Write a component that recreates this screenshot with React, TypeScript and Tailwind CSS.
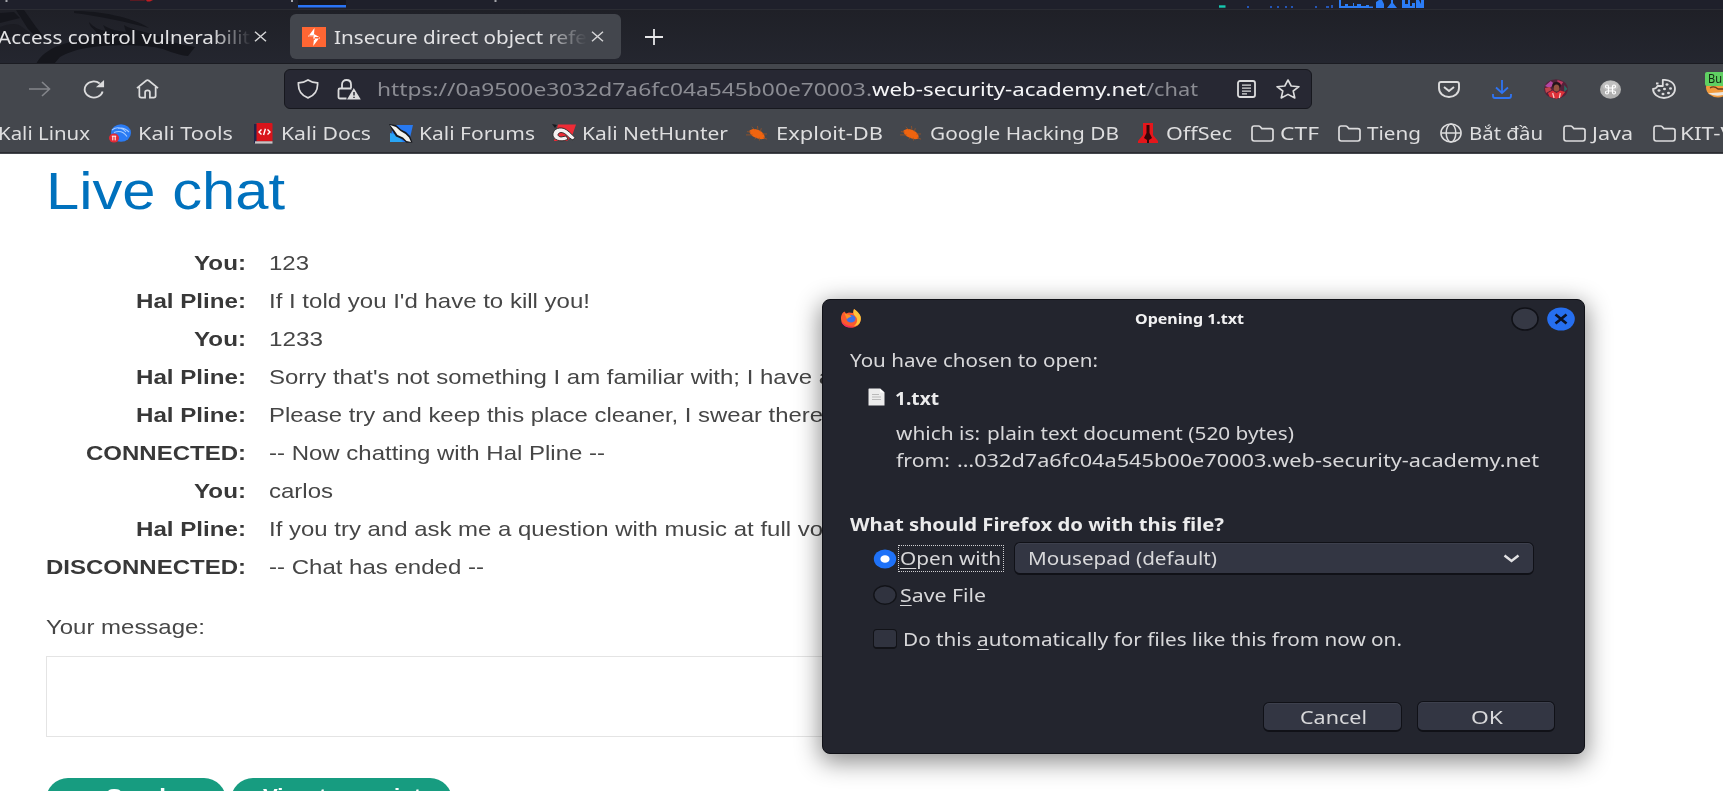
import { useLayoutEffect, useRef, type ReactNode } from "react";

/** Single line of text stretched horizontally to fill a given width. */
function Fit({ w, className = "", children }: { w: number; className?: string; children: ReactNode }) {
  const inner = useRef<HTMLSpanElement>(null);
  useLayoutEffect(() => {
    const el = inner.current;
    if (!el) return;
    el.style.transform = "none";
    const natural = el.getBoundingClientRect().width;
    el.style.transform = `scaleX(${w / natural})`;
  }, [w]);
  return (
    <span className={`block shrink-0 text-left ${className}`} style={{ width: w }}>
      <span ref={inner} className="inline-block origin-left whitespace-pre">
        {children}
      </span>
    </span>
  );
}

function Icon({
  w,
  h,
  box = "0 0 24 24",
  className = "",
  children,
}: {
  w: number;
  h: number;
  box?: string;
  className?: string;
  children: ReactNode;
}) {
  return (
    <svg width={w} height={h} viewBox={box} preserveAspectRatio="none" fill="none" className={`block shrink-0 ${className}`}>
      {children}
    </svg>
  );
}

function Folder() {
  return (
    <Icon w={23} h={17} box="0 0 23 17">
      <path d="M1 3.2Q1 1 3.2 1H7.6Q8.6 1 9.3 1.8L10.8 3.6H19.8Q22 3.6 22 5.6V13.8Q22 16 19.8 16H3.2Q1 16 1 13.8Z" stroke="#dcdcdd" strokeWidth="1.7" />
    </Icon>
  );
}

function Bug() {
  return (
    <Icon w={22} h={17} box="0 0 23 18">
      <path d="M3.500 6C7 3 12 4 16 7C18.500 9 20.500 12 19 14.500C16 15.500 12 14.800 9 13C6 11.500 3.500 9 3.500 6Z" fill="#f0640f" />
      <path d="M1 7L5 7.5M0 10.500L7 10.500M6 2L9 5M12 1L12.500 5M16 3.5L15 7M9 15L11 13M14 16.500L14 13.500M22 9.500L17 9.500M22 15L18 13.5" stroke="#a35422" strokeWidth=".8" />
    </Icon>
  );
}

function KaliTools() {
  return (
    <Icon w={22} h={19} box="0 0 22 19">
      <ellipse cx="12" cy="9" rx="10" ry="8.700" fill="#2a7bf4" />
      <path d="M3 6C8 2 14 4 17 8M5 8.5C10 6.5 15 8 18 12.5M9 4.5C13 3 17 5 20 8" stroke="#a5cbff" strokeWidth="1.1" />
      <ellipse cx="5" cy="14" rx="5" ry="4.6" fill="#e32a36" />
      <path d="M2.8 12.2H7.2M3.8 12.2V16.4M6.2 12.2V16.4" stroke="#fff" strokeWidth="1" />
    </Icon>
  );
}

function KaliDocs() {
  return (
    <Icon w={19} h={21} box="0 0 19 21">
      <path d="M0 1H4V20H0Z" fill="#20244a" />
      <path d="M2.5 0H17.5Q18.5 0 18.5 1V18.5H2.5Z" fill="#d9141b" />
      <path d="M1 18.3H18.5V20.6H1Z" fill="#c9c3c5" />
      <path d="M7.5 6.5L5 9L7.5 11.5M13.5 6.5L16 9L13.5 11.5M11.4 5.8L9.6 12" stroke="#fff" strokeWidth="1.4" />
    </Icon>
  );
}

function KaliForums() {
  return (
    <Icon w={24} h={19} box="0 0 24 19">
      <path d="M4 1H24L20 18H1Z" fill="#2879f0" />
      <path d="M1 9L8 11L14 18H1Z" fill="#29a5f5" />
      <path d="M0 0L7 1L12 5.500L17 8L21 12L23.500 18.500L17.500 18.800L13 15L7 12.500L3.500 7Z" fill="#17181d" />
      <path d="M1 1L7 3L11.500 7L16.500 10L20 13.500L22 18L17.5 17L14 13.5L8.5 11L5 6Z" fill="#f2f2ee" />
    </Icon>
  );
}

function NetHunter() {
  return (
    <Icon w={24} h={18} box="0 0 24 18">
      <path d="M6 .5H24L20 12L15 17H2Z" fill="#ee2b36" />
      <path d="M0 0L5 1L3 4Z" fill="#17181d" />
      <path d="M1 12C0 6 6 2.5 12 4.5C16 6 19 10 23 13.5L21 16C16 14 14 8.5 9 8.5C5 9 5 12.5 9 13L14 12L16 15C12 18 3 17.5 1 12Z" fill="#f4f1f1" stroke="#222" strokeWidth=".9" />
    </Icon>
  );
}

function OffSec() {
  return (
    <Icon w={20} h={20} box="0 0 20 20">
      <path d="M5 0H15V12L20 18V20H0V18L5 12Z" fill="#e5161b" />
      <path d="M8.5 2H11.5V10L14 15L11 17V20H9V17L6 15L8.5 10Z" fill="#350608" />
    </Icon>
  );
}

function Globe() {
  return (
    <Icon w={22} h={20} box="0 0 22 20">
      <g stroke="#dcdcdd" strokeWidth="1.5">
        <ellipse cx="11" cy="10" rx="10.1" ry="9" />
        <ellipse cx="11" cy="10" rx="4.8" ry="9" />
        <path d="M1 10H21" />
      </g>
    </Icon>
  );
}

const bookmarks: { icon?: ReactNode; label: string; gap: number; pad: number; w: number }[] = [
  { label: "Kali Linux", gap: 0, pad: -2, w: 92 },
  { icon: <KaliTools />, label: "Kali Tools", gap: 19, pad: 7, w: 95 },
  { icon: <KaliDocs />, label: "Kali Docs", gap: 21, pad: 8, w: 90 },
  { icon: <KaliForums />, label: "Kali Forums", gap: 18, pad: 6, w: 116 },
  { icon: <NetHunter />, label: "Kali NetHunter", gap: 17, pad: 6, w: 146 },
  { icon: <Bug />, label: "Exploit-DB", gap: 18, pad: 8, w: 107 },
  { icon: <Bug />, label: "Google Hacking DB", gap: 17, pad: 8, w: 189 },
  { icon: <OffSec />, label: "OffSec", gap: 19, pad: 8, w: 66 },
  { icon: <Folder />, label: "CTF", gap: 19, pad: 6, w: 39 },
  { icon: <Folder />, label: "Tieng", gap: 19, pad: 6, w: 54 },
  { icon: <Globe />, label: "Bắt đầu", gap: 19, pad: 7, w: 74 },
  { icon: <Folder />, label: "Java", gap: 20, pad: 6, w: 41 },
  { icon: <Folder />, label: "KIT-V", gap: 20, pad: 4, w: 54 },
];

const messages: { who: string; lw: number; text: string; w: number }[] = [
  { who: "You:", lw: 52, text: "123", w: 40 },
  { who: "Hal Pline:", lw: 110, text: "If I told you I'd have to kill you!", w: 321 },
  { who: "You:", lw: 52, text: "1233", w: 54 },
  { who: "Hal Pline:", lw: 110, text: "Sorry that's not something I am familiar with; I have a", w: 563 },
  { who: "Hal Pline:", lw: 110, text: "Please try and keep this place cleaner, I swear there", w: 554 },
  { who: "CONNECTED:", lw: 160, text: "-- Now chatting with Hal Pline --", w: 336 },
  { who: "You:", lw: 52, text: "carlos", w: 64 },
  { who: "Hal Pline:", lw: 110, text: "If you try and ask me a question with music at full vo", w: 554 },
  { who: "DISCONNECTED:", lw: 200, text: "-- Chat has ended --", w: 215 },
];

function Dragon() {
  return (
    <svg className="absolute left-0 top-0" width="220" height="54" viewBox="0 9 220 54" fill="#15161c">
      <path d="M0 12L14 11L20 17L0 22Z" />
      <path d="M0 26C10 22 18 22 22 26L30 32L0 38Z" opacity=".5" />
      <path d="M16 9H24L36 26L44 36L38 38L28 28Z" />
      <path d="M74 10C100 10 132 16 149 27C130 22 100 15 74 12Z" />
      <path d="M36 63C44 48 62 42 84 38C108 32 90 30 89 21C94 27 100 29 106 30L103 24C111 29 118 30 126 31L124 24C132 30 150 30 164 38C176 43 186 44 195 46L188 55C176 54 166 48 154 46C130 43 82 42 60 56L54 63Z" />
    </svg>
  );
}

function TopStrip() {
  return (
    <div className="h-[9px] shrink-0 overflow-hidden bg-[#1f202b]">
      <svg className="block" width="1723" height="9" viewBox="0 0 1723 9">
        <path d="M5.5 0H7.5V2H5.5ZM291 0H293V2H291ZM494.500 0H496.500V2H494.500Z" fill="#a3a4aa" />
        <path d="M130 0H146L144 1H130Z" fill="#5a1a22" />
        <path d="M146 0H153L150 1.500H147Z" fill="#c21c22" />
        <path d="M298 0H346V5H298Z" fill="#16171f" />
        <path d="M298 5H346V7.400H298Z" fill="#2a74f5" />
        <path d="M1219 5.300H1225.500V7.700H1219Z" fill="#16c9b0" />
        <path d="M1247 6h2v2h-2zM1270 6h2v2h-2zM1277 6h2v2h-2zM1285 6h2v2h-2zM1291 6h2v2h-2zM1315 6h2v2h-2zM1326 6h3v2h-3zM1331 5h2v3h-2z" fill="#2455b5" />
        <path d="M1339 8V0H1341V6H1345V4H1348V6H1353V3H1354V6H1357V4H1361V6H1366V5H1369V6.500H1373V8ZM1376 8V2L1379 0H1382L1384 4V8ZM1387 8L1391 3V0H1393V3L1397 8ZM1402 8V0H1405V4H1408V0H1410V6H1412V3H1415V8ZM1416 8V0H1419L1421 4V0H1424V8Z" fill="#2b7cf6" />
      </svg>
    </div>
  );
}

function Close() {
  return (
    <Icon w={13} h={11} box="0 0 13 11">
      <path d="M1 .8L12 10.200M12 .8L1 10.200" stroke="#d5d5d7" strokeWidth="1.500" />
    </Icon>
  );
}

function Tabs() {
  return (
    <div className="relative flex h-[55px] shrink-0 items-center overflow-hidden border-y border-t-[#2b2c33] border-b-[#1b1c22] bg-linear-to-b from-[#1f2027] to-[#24262f] text-[18px] text-[#e2e2e4]">
      <Dragon />
      <div className="relative w-[252px] overflow-hidden mask-r-from-[84%] mask-r-to-100%">
        <Fit w={252} className="-ml-0.5 h-[53px] leading-[54px]">Access control vulnerabilit</Fit>
      </div>
      <div className="relative ml-0.5">
        <Close />
      </div>
      <div className="ml-[23px] flex h-[45px] w-[331px] items-center rounded-md bg-[#43464d] pl-3">
        <Icon w={24} h={20} box="0 0 24 20">
          <path d="M0 0H24V20H0Z" fill="#ff6633" />
          <path d="M12.500 1L6 9.800H11.800ZM11.200 19L18 10H12.200ZM6 8.500H12.800V13H11.800L12 10H6ZM12 7L18 10.500V11.500H11.200Z" fill="#fff" />
        </Icon>
        <div className="ml-2 w-[253px] overflow-hidden mask-r-from-[82%] mask-r-to-100%">
          <Fit w={253} className="h-[45px] leading-[46px]">Insecure direct object refe</Fit>
        </div>
        <div className="ml-1">
          <Close />
        </div>
      </div>
      <Icon w={18} h={16} box="0 0 18 16" className="ml-6">
        <path d="M9 0V16M0 8H18" stroke="#e6e6e8" strokeWidth="1.800" />
      </Icon>
    </div>
  );
}

function Toolbar() {
  return (
    <div className="flex h-[50px] shrink-0 items-center">
      <Icon w={22} h={16} box="0 0 22 16" className="ml-[29px]">
        <path d="M0 8H20.500M13 1L20.500 8L13 15" stroke="#84868b" strokeWidth="1.600" />
      </Icon>
      <Icon w={22} h={19} box="0 0 23 20" className="ml-8">
        <path d="M17.500 3.600A9.500 8.500 0 1 0 20.500 12" stroke="#dcdcdd" strokeWidth="1.900" />
        <path d="M22 0V7.500H13.500Z" fill="#dcdcdd" />
      </Icon>
      <Icon w={23} h={20} box="0 0 24 21" className="ml-[31px]">
        <path d="M1 9.500L10.800 1.600Q12 .8 13.200 1.600L23 9.500M3.500 8.500V17.500Q3.500 19.500 5.500 19.500H9.500V13.800Q9.500 12 12 12T14.500 13.800V19.500H18.500Q20.500 19.500 20.500 17.500V8.500" stroke="#dcdcdd" strokeWidth="1.800" />
      </Icon>
      <div className="ml-[125px] flex h-10 w-[1028px] items-center rounded-md border-[1.500px] border-[#17181e] bg-[#272833] pl-3 text-[18px]">
        <Icon w={22} h={20} box="0 0 23 21">
          <path d="M11.500 1C14.500 3 18 3.800 21.500 4C22 12 18 17.500 11.500 19.800C5 17.500 1 12 1.500 4C5 3.800 8.500 3 11.500 1Z" stroke="#dcdcdd" strokeWidth="1.800" />
        </Icon>
        <Icon w={24} h={21} box="0 0 24 21" className="ml-[18px]">
          <path d="M5 9V5.500C5 2.500 7 1 9.500 1S14 2.500 14 5.500V9M9.500 19.500H3Q1.500 19.500 1.500 18V11Q1.500 9.500 3 9.500H14.500" stroke="#dcdcdd" strokeWidth="1.800" />
          <path d="M16.800 9L23.800 20.500H10Z" fill="#dcdcdd" />
          <path d="M17 13V16.500M17 17.800V19" stroke="#272833" strokeWidth="1.500" />
        </Icon>
        <Fit w={495} className="ml-4 leading-[37px] text-[#8b8c93]">https://0a9500e3032d7a6fc04a545b00e70003.</Fit>
        <Fit w={274} className="leading-[37px] text-[#f5f5f7]">web-security-academy.net</Fit>
        <Fit w={52} className="leading-[37px] text-[#8b8c93]">/chat</Fit>
        <Icon w={19} h={18} box="0 0 19 18" className="ml-[39px]">
          <rect x="1" y="1" width="17" height="16" rx="2" stroke="#dcdcdd" strokeWidth="1.800" />
          <path d="M5 5.200H14M5 8.200H14M5 11.200H14M5 13.800H10" stroke="#dcdcdd" strokeWidth="1.300" />
        </Icon>
        <Icon w={24} h={20} box="0 0 24 20" className="ml-5">
          <path d="M12 1L15.200 7L23 7.700L17.200 12L18.800 19L12 15.400L5.200 19L6.800 12L1 7.700L8.800 7Z" stroke="#dcdcdd" strokeWidth="1.600" strokeLinejoin="round" />
        </Icon>
      </div>
      <Icon w={22} h={17} box="0 0 22 17" className="ml-[126px]">
        <path d="M3 1H19Q21 1 21 3V7C21 12.500 16.500 16 11 16S1 12.500 1 7V3Q1 1 3 1Z" stroke="#dcdcdd" strokeWidth="1.900" />
        <path d="M6 6L11 10L16 6" stroke="#dcdcdd" strokeWidth="2" />
      </Icon>
      <Icon w={20} h={19} box="0 0 20 19" className="ml-8">
        <path d="M10 0V13M4 7.500L10 13L16 7.500M1 14V16Q1 18 3 18H17Q19 18 19 16V14" stroke="#2f74f3" strokeWidth="1.800" />
      </Icon>
      <Icon w={24} h={20} box="0 0 25 20" className="ml-8">
        <ellipse cx="12.500" cy="10" rx="12.300" ry="9.800" fill="#54223a" />
        <path d="M1 7L7 2L11 5L6 9Z" fill="#b247a4" />
        <path d="M14 1L20 3L18 6L14 4Z" fill="#c23a62" />
        <path d="M1 9L6 8L8 11L2 14Z" fill="#c2434a" />
        <path d="M21 6L24.500 10L21 13Z" fill="#2b6b63" />
        <ellipse cx="13" cy="6.500" rx="4.500" ry="3.500" fill="#231419" />
        <ellipse cx="13" cy="9" rx="3" ry="3.500" fill="#95533f" />
        <path d="M4 14L9 11.500L13 14L17 11.500L22 13L18 18L13 19.800L6 18Z" fill="#dd3038" />
        <path d="M9 14L10.500 19M17 14L16 19" stroke="#f4c9c6" strokeWidth="1.300" />
      </Icon>
      <Icon w={21} h={19} box="0 0 21 19" className="ml-[32px]">
        <ellipse cx="10.500" cy="9.500" rx="10.500" ry="9.300" fill="#b0b0b0" />
        <ellipse cx="10.500" cy="6" rx="8" ry="5" fill="#c0c0c0" />
        <path d="M8.500 8H12.500V11H8.500ZM8.500 8H7Q5.500 8 5.500 6.500T7 5T8.500 6.500ZM12.500 8H14Q15.500 8 15.500 6.500T14 5T12.500 6.500ZM8.500 11H7Q5.500 11 5.500 12.500T7 14T8.500 12.500ZM12.500 11H14Q15.500 11 15.500 12.500T14 14T12.500 12.500Z" stroke="#fff" strokeWidth="1.200" />
      </Icon>
      <Icon w={24} h={20} box="0 0 24 20" className="ml-[31px]">
        <path d="M10.800 1C18 .2 23 4.500 23 10C23 15 18 19 12 19S1 15 1 9.800C3 9.800 4.800 8.800 5.500 7H10.800V1.500Z" stroke="#dcdcdd" strokeWidth="1.800" strokeLinejoin="round" />
        <path d="M4 3.500H6.500V5.500H4Z" fill="#dcdcdd" />
        <g fill="#dcdcdd">
          <ellipse cx="15" cy="5.500" rx="1.500" ry="1.300" />
          <ellipse cx="18.500" cy="9.500" rx="1.500" ry="1.300" />
          <ellipse cx="12.500" cy="10" rx="1.500" ry="1.300" />
          <ellipse cx="7" cy="11.500" rx="1.500" ry="1.300" />
          <ellipse cx="16.500" cy="14" rx="1.500" ry="1.300" />
          <ellipse cx="11" cy="15" rx="1.500" ry="1.300" />
        </g>
      </Icon>
      <div className="relative ml-[29px] h-[50px] w-[18px] shrink-0 overflow-hidden">
        <svg className="absolute left-0 top-[14px]" width="18" height="20" viewBox="0 0 18 20">
          <ellipse cx="13" cy="9.500" rx="12" ry="10" fill="#f29a3c" />
          <path d="M3 15Q9 19 18 17V14Q8 15 3 15Z" fill="#ece5dc" />
          <path d="M5 10Q9 7.500 13 11H18" stroke="#6b3c1c" strokeWidth="1.300" fill="none" />
        </svg>
        <div className="absolute left-0 top-[8px] h-[14px] w-[20px] rounded-xs bg-[#5fd062] pl-[3px] text-[12px] leading-[14px] text-[#10240f]">
          <Fit w={14}>Bu</Fit>
        </div>
      </div>
    </div>
  );
}

function Bookmarks() {
  return (
    <div className="flex h-[39px] shrink-0 items-center overflow-hidden border-b border-[#2b2c31] text-[18px] text-[#dededf]">
      {bookmarks.map((b) => (
        <div key={b.label} className="flex shrink-0 items-center" style={{ marginLeft: b.gap }}>
          {b.icon}
          <div className="shrink-0" style={{ marginLeft: b.pad }}>
            <Fit w={b.w} className="leading-[38px]">{b.label}</Fit>
          </div>
        </div>
      ))}
    </div>
  );
}

function Chat() {
  return (
    <main className="flex h-[637px] shrink-0 flex-col overflow-hidden bg-white pl-[46px] font-['Liberation_Sans',sans-serif] text-[21px] text-[#464646]">
      <h1 className="mt-1.5 text-[51px] leading-[64px] text-[#0071bd]">
        <Fit w={239}>Live chat</Fit>
      </h1>
      <div className="mt-[19.500px]">
        {messages.map((m, i) => (
          <div key={i} className="flex h-[38px] items-center leading-[38px]">
            <div className="flex w-[200px] shrink-0 justify-end font-bold text-[#383838]">
              <Fit w={m.lw}>{m.who}</Fit>
            </div>
            <Fit w={m.w} className="ml-[23px]">{m.text}</Fit>
          </div>
        ))}
      </div>
      <Fit w={159} className="mt-[22px] leading-[38px]">Your message:</Fit>
      <div className="mt-[10px] h-[81px] w-[1400px] shrink-0 border border-[#e4e4e4]" />
      <div className="mt-[41px] flex gap-[5px] text-[21px] font-bold leading-[38px] text-white">
        <div className="flex h-[44px] w-[180px] shrink-0 justify-center rounded-full bg-[#179c80]">
          <Fit w={60} className="-mt-px">Send</Fit>
        </div>
        <div className="flex h-[44px] w-[221px] shrink-0 justify-center rounded-full bg-[#179c80]">
          <Fit w={158} className="-mt-px">View transcript</Fit>
        </div>
      </div>
    </main>
  );
}

function Radio({ on = false }: { on?: boolean }) {
  return on ? (
    <Icon w={24} h={20} box="0 0 24 20">
      <ellipse cx="12" cy="10" rx="11.200" ry="9.400" fill="#1f72f8" />
      <ellipse cx="12" cy="10" rx="4.600" ry="3.800" fill="#fff" />
    </Icon>
  ) : (
    <Icon w={24} h={20} box="0 0 24 20">
      <ellipse cx="12" cy="10" rx="11.200" ry="9.300" fill="#30333f" stroke="#121318" strokeWidth="1.400" />
    </Icon>
  );
}

function Dialog() {
  return (
    <div className="absolute left-[822px] top-[299px] flex h-[455px] w-[763px] flex-col rounded-lg border border-[#101117] bg-[#23252e] pl-[27px] text-[18px] text-[#d8d8da] shadow-[0_6px_24px_2px_rgba(0,0,0,0.450)]">
      <div className="flex h-[37px] items-center">
        <Icon w={22} h={19} box="0 0 22 19" className="-ml-[10px]">
          <path d="M1 8C1.500 5 3 3 4.500 2.500L6 4.500L9 3.500L13 4L14 0C16 1.500 17 3 17.500 4L19.500 5.500C22 10 21 18.500 11 18.500C4 18.500 .5 13.500 1 8Z" fill="#fb5b2e" />
          <path d="M14 0C17 2 19.500 4.500 20.500 7C22 12 19 17 14 17C18 14 18 9 15 7C13 5 13 2.500 14 0Z" fill="#fcc63c" />
          <path d="M1 12C3 18 9 19.500 14 18C9 17 4 16 1 12Z" fill="#f22c5b" />
          <ellipse cx="11" cy="9.800" rx="4.500" ry="3.800" fill="#3c72e8" />
          <path d="M4.500 4.500L9.500 6L11.500 7.500L8 9L7 10.500Z" fill="#fd9226" />
        </Icon>
        <Fit w={109} className="-mt-px ml-[273px] text-[15px] font-bold leading-[35px] text-[#f1f1f2]">Opening 1.txt</Fit>
        <Icon w={28} h={24} box="0 0 28 24" className="ml-[267px]">
          <ellipse cx="14" cy="12" rx="13" ry="11" fill="#353844" stroke="#101117" strokeWidth="1.600" />
        </Icon>
        <Icon w={28} h={24} box="0 0 28 24" className="ml-2">
          <ellipse cx="14" cy="12" rx="13.800" ry="11.500" fill="#266ff0" />
          <path d="M8.500 7.500L19.500 16.500M19.500 7.500L8.500 16.500" stroke="#0c1226" strokeWidth="2.700" />
        </Icon>
      </div>
      <Fit w={248} className="pt-px leading-[44px]">You have chosen to open:</Fit>
      <div className="flex h-8 items-center pl-[18px]">
        <Icon w={17} h={18} box="0 0 17 18" className="-mt-0.5">
          <path d="M1 .5H12L16.500 4.500V17.500H.5V1Z" fill="#ececec" />
          <path d="M12 .5L16.500 4.500H12Z" fill="#fff" />
          <path d="M4 6.500H11M4 9H13M4 11.500H13" stroke="#b9b9b9" strokeWidth="1" />
        </Icon>
        <Fit w={44} className="ml-[10px] font-bold leading-8 text-[#ebebec]">1.txt</Fit>
      </div>
      <div className="mt-[5px] flex leading-7">
        <Fit w={84} className="ml-[46px]">which is:</Fit>
        <Fit w={307} className="ml-[7px]">plain text document (520 bytes)</Fit>
      </div>
      <div className="flex leading-[27px]">
        <Fit w={54} className="ml-[46px]">from:</Fit>
        <Fit w={582} className="ml-[7px]">…032d7a6fc04a545b00e70003.web-security-academy.net</Fit>
      </div>
      <Fit w={374} className="mt-[35px] font-bold leading-[30px] text-[#ebebec]">What should Firefox do with this file?</Fit>
      <div className="mt-[3px] flex h-[33px] items-center pl-[23px]">
        <Radio on />
        <div className="ml-px flex h-[27px] w-[106px] items-center border border-dotted border-[#d0d0d2] pl-px">
          <Fit w={101} className="leading-[27px]">
            <span className="underline decoration-1 underline-offset-3">O</span>pen with
          </Fit>
        </div>
        <div className="ml-[10px] flex h-[33px] w-[520px] items-center rounded-md border border-b-2 border-[#101117] bg-[#333643] pl-[13px] shadow-[inset_0_1px_0_#3d404d]">
          <Fit w={189} className="leading-[32px]">Mousepad (default)</Fit>
          <Icon w={17} h={9} box="0 0 17 9" className="ml-[286px]">
            <path d="M1.500 1.500L8.500 7L15.500 1.500" stroke="#e2e2e4" strokeWidth="2.500" />
          </Icon>
        </div>
      </div>
      <div className="mt-[5px] flex h-[30px] items-center pl-[23px]">
        <Radio />
        <Fit w={86} className="ml-[3px] leading-[30px]">
          <span className="underline decoration-1 underline-offset-3">S</span>ave File
        </Fit>
      </div>
      <div className="mt-[14px] flex h-[30px] items-center pl-[23px]">
        <div className="h-5 w-6 rounded-[4px] border border-b-2 border-[#121318] bg-[#30333f]" />
        <Fit w={499} className="ml-1.5 leading-[30px]">
          Do this <span className="underline decoration-1 underline-offset-3">a</span>utomatically for files like this from now on.
        </Fit>
      </div>
      <div className="mt-[47px] flex items-end gap-[15px] pl-[413px] leading-[28px]">
        <button className="flex h-[30px] w-[139px] justify-center rounded-md border border-b-2 border-[#101117] bg-[#333643] pl-0.5 shadow-[inset_0_1px_0_#3d404d]">
          <Fit w={67}>Cancel</Fit>
        </button>
        <button className="flex h-[31px] w-[138px] justify-center rounded-md border border-b-2 border-[#101117] bg-[#333643] pl-0.5 pt-px shadow-[inset_0_1px_0_#3d404d]">
          <Fit w={32}>OK</Fit>
        </button>
      </div>
    </div>
  );
}

export default function App() {
  return (
    <div className="relative flex h-[791px] w-[1723px] flex-col overflow-hidden bg-[#44474d] font-['Noto_Sans',sans-serif]">
      <TopStrip />
      <Tabs />
      <Toolbar />
      <Bookmarks />
      <div className="h-px shrink-0" />
      <Chat />
      <Dialog />
    </div>
  );
}
